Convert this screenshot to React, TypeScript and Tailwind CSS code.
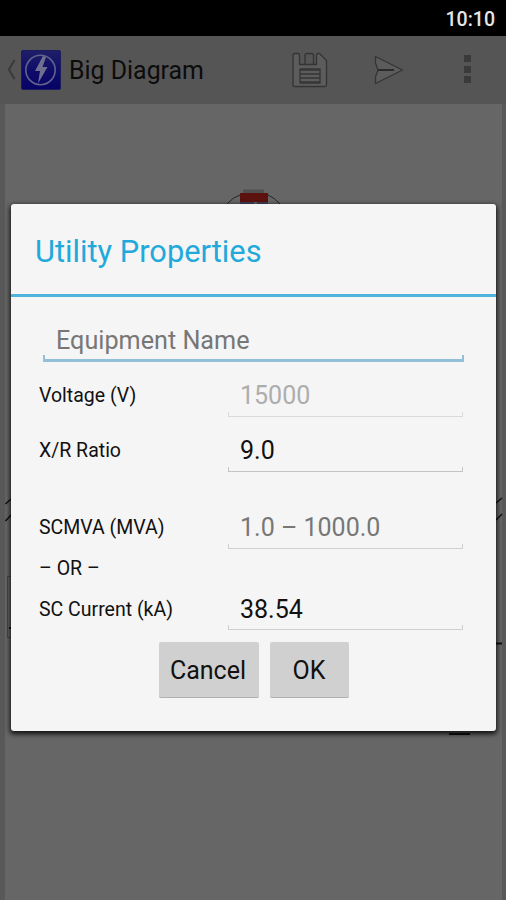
import React from "react";

function AppIcon() {
  return (
    <svg width="40" height="40" viewBox="0 0 40 40" className="shrink-0">
      <defs>
        <linearGradient id="tile" x1="0" y1="0" x2="0" y2="1">
          <stop offset="0" stopColor="#1f1e68" />
          <stop offset="0.5" stopColor="#0f0d6a" />
          <stop offset="1" stopColor="#060366" />
        </linearGradient>
      </defs>
      <rect x="0.5" y="0.5" width="39" height="39" rx="1.5" fill="url(#tile)" stroke="#1c1c5c" strokeWidth="1" />
      <circle cx="19.5" cy="20" r="14.700" fill="none" stroke="#62628a" strokeWidth="1.6" />
      <path d="M22 6L14 21h5L17 33.500 26.500 17h-5L25 7z" fill="#6f6f90" />
    </svg>
  );
}

function SaveIcon() {
  return (
    <svg width="36" height="36" viewBox="0 0 36 36" fill="none" stroke="#343434" strokeWidth="1.3" strokeLinejoin="round">
      <path d="M3 1.500h3q1.500 0 1.500 1.500v9.500h17V3q0-1.500 1.500-1.500h1.500L34.500 8.500V33q0 1.500-1.500 1.500H2.500Q1 34.500 1 33V3.500q0-2 2-2z" fill="#5c5c5c" />
      <path d="M13 12V3.500q0-2 2-2h4.500q2 0 2 2V12" />
      <path d="M8 17h20v14H8z" />
      <path d="M8 18h20M8 22h20M8 26h20M8 30h20" strokeWidth="1.600" />
    </svg>
  );
}

function SendIcon() {
  return (
    <svg width="30" height="30" viewBox="0 0 30 30" fill="none" stroke="#343434" strokeWidth="1.3" strokeLinejoin="round">
      <path d="M1.500 1.500L28.500 15 1.500 28.500V22L4 15 1.500 8z" fill="#5c5c5c" />
      <path d="M4 15h16" stroke="#262626" strokeWidth="1.800" />
    </svg>
  );
}

function Diagram() {
  return (
    <svg className="block" width="506" height="796" viewBox="0 104 506 796" fill="none">
      <rect x="5" y="104" width="497" height="796" fill="#666666" />
      <rect x="243" y="189.500" width="21" height="3.500" fill="#505050" />
      <path d="M227 204q6-7 13-9M268 195q7 3 12 9" stroke="#252525" />
      <rect x="240" y="193" width="28" height="9" fill="#5c120e" />
      <path d="M240 203h28" stroke="#1d1b52" strokeDasharray="14 3" />
      <path d="M5.500 504l5.500-5M5.500 521l5.500-6M496 503l6-5M496 520l6-6" stroke="#111" strokeWidth="1.500" />
      <path d="M7.500 576v61M7 576.500h4M7 637.500h4" stroke="#484848" />
      <path d="M9 628h3M496 643.500h6" stroke="#111" strokeWidth="2" />
      <path d="M449 734h21" stroke="#111" strokeWidth="2" />
    </svg>
  );
}

function Field({ value, tone = "text-[#111]", line = "border-[#cfcfcf]" }: { value: string; tone?: string; line?: string }) {
  return (
    <div className="relative h-full w-[235px]">
      <div className={"pl-3 text-[25px] " + tone}>{value}</div>
      <div className={"absolute inset-x-0 bottom-0 h-[5px] border-x border-b-[1.5px] " + line} />
    </div>
  );
}

function Row({ label, leading = "leading-[38px]", children }: { label: string; leading?: string; children: React.ReactNode }) {
  return (
    <div className="flex h-[40px] pl-7">
      <div className={"w-[189px] text-[19.500px] text-[#111] " + leading}>{label}</div>
      <div className={"h-full " + leading}>{children}</div>
    </div>
  );
}

export default function App() {
  return (
    <div className="relative h-[900px] w-[506px] overflow-hidden bg-[#585858] font-['Roboto',sans-serif]">
      <header className="flex h-9 items-center justify-end bg-black pr-[11px] pt-[4px] text-[19.500px] font-medium text-[#e6e6e6]">
        10:10
      </header>
      <div className="flex h-[68px] items-center bg-[#555555]">
        <svg width="21" height="24" viewBox="0 0 21 24" fill="none" stroke="#3c3c3c" strokeWidth="2.300">
          <path d="M14.500 2L9 11.500 14.500 21" />
        </svg>
        <AppIcon />
        <div className="ml-2 w-[223px] pt-[2px] text-[24.900px] text-[#0c0c0c]">Big Diagram</div>
        <SaveIcon />
        <div className="ml-[46px]"><SendIcon /></div>
        <div className="ml-[60px] flex flex-col gap-[3.500px] pb-[2px]">
          <span className="size-[7px] bg-[#3a3a3a]" />
          <span className="size-[7px] bg-[#3a3a3a]" />
          <span className="size-[7px] bg-[#3a3a3a]" />
        </div>
      </div>
      <Diagram />

      <div className="absolute left-[11px] top-[204px] h-[527px] w-[485px] rounded-[3px] bg-[#f5f5f5] shadow-[0_2px_5px_1px_rgba(0,0,0,0.85)]">
        <h1 className="h-[93px] border-b-[3px] border-[#4db2dc] pl-6 text-[30.800px] leading-[95px] text-[#22a9dc]">
          Utility Properties
        </h1>
        <div className="relative mx-8 mt-[23px] h-[42px] pl-[13px] text-[25.200px] leading-[41px] text-[#777]">
          Equipment Name
          <div className="absolute inset-x-0 bottom-0 h-[7px] border-x-2 border-b-[3px] border-[#92c0d8]" />
        </div>
        <div className="mt-[15px]">
          <Row label="Voltage (V)"><Field value="15000" tone="text-[#adadad]" line="border-[#dadada]" /></Row>
        </div>
        <div className="mt-[15px]">
          <Row label="X/R Ratio"><Field value="9.0" line="border-[#c4c4c4]" /></Row>
        </div>
        <div className="mt-[37px]">
          <Row label="SCMVA (MVA)"><Field value="1.0 – 1000.0" tone="text-[#777]" /></Row>
        </div>
        <div className="h-[41px] pl-7 text-[19.500px] leading-[40px] text-[#111]">– OR –</div>
        <Row label="SC Current (kA)" leading="leading-[40px]"><Field value="38.54" /></Row>
        <div className="mt-3 flex gap-[11px] pl-[148px]">
          <button className="h-14 w-[100px] rounded-[2px] border-b border-[#b0b0b0] bg-[#d0d0d0] pr-[2px] pt-[3px] text-[25px] text-[#111]">Cancel</button>
          <button className="h-14 w-[79px] rounded-[2px] border-b border-[#b0b0b0] bg-[#d0d0d0] pr-[1px] pt-[3px] text-[25px] text-[#111]">OK</button>
        </div>
      </div>
    </div>
  );
}
